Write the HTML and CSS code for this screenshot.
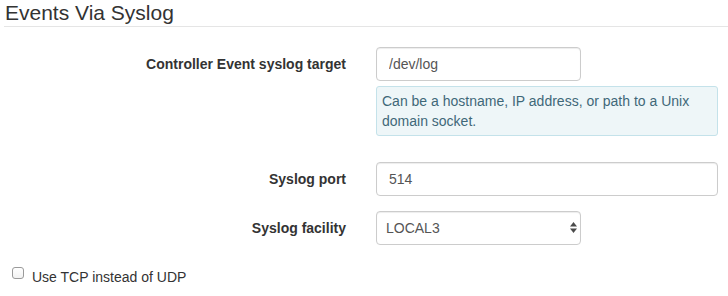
FILE: index.html
```html
<!DOCTYPE html>
<html lang="en">
<head>
  <meta charset="UTF-8">
  <title>Events Via Syslog</title>
  <link rel="stylesheet" href="styles.css">
</head>
<body>
  <form class="syslog-form">
    <h3 class="legend">Events Via Syslog</h3>

    <div class="form-group">
      <label class="control-label" for="target">Controller Event syslog target</label>
      <div class="field">
        <input type="text" id="target" class="form-control short" value="/dev/log">
        <div class="help-block">Can be a hostname, IP address, or path to a Unix domain socket.</div>
      </div>
    </div>

    <div class="form-group">
      <label class="control-label" for="port">Syslog port</label>
      <div class="field">
        <input type="text" id="port" class="form-control" value="514">
      </div>
    </div>

    <div class="form-group">
      <label class="control-label" for="facility">Syslog facility</label>
      <div class="field">
        <div class="select-wrap short">
          <select id="facility" class="form-control">
            <option>LOCAL0</option>
            <option>LOCAL1</option>
            <option>LOCAL2</option>
            <option selected>LOCAL3</option>
            <option>LOCAL4</option>
            <option>LOCAL5</option>
            <option>LOCAL6</option>
            <option>LOCAL7</option>
          </select>
          <svg class="select-arrows" width="7" height="11" viewBox="0 0 7 11">
            <path d="M3.5 0 L7 4.5 L0 4.5 Z" fill="#4a4a4a"/>
            <path d="M0 6.5 L7 6.5 L3.5 11 Z" fill="#4a4a4a"/>
          </svg>
        </div>
      </div>
    </div>

    <div class="checkbox">
      <label><input type="checkbox" id="tcp"> Use TCP instead of UDP</label>
    </div>
  </form>
</body>
</html>
```

FILE: styles.css
```css
* {
  box-sizing: border-box;
}

body {
  margin: 0;
  font-family: 'Liberation Sans', Arial, sans-serif;
  font-size: 14px;
  line-height: 20px;
  color: #333;
  background: #fff;
}

.legend {
  margin: 0 0 20px 4px;
  padding: 1px 0 2px 1px;
  font-size: 21px;
  font-weight: 400;
  line-height: 23px;
  color: #333;
  border-bottom: 1px solid #e5e5e5;
}

.form-group {
  display: grid;
  grid-template-columns: 346px 342px;
  column-gap: 30px;
  margin-bottom: 15px;
}

.control-label {
  padding-top: 7px;
  text-align: right;
  font-weight: 700;
}

.form-control {
  display: block;
  width: 100%;
  height: 34px;
  padding: 6px 12px;
  font-family: inherit;
  font-size: 14px;
  line-height: 20px;
  color: #555;
  background: #fff;
  border: 1px solid #ccc;
  border-radius: 4px;
  box-shadow: inset 0 1px 1px rgba(0, 0, 0, 0.075);
}

.short {
  width: 205px;
}

.help-block {
  margin: 5px 0 11px;
  padding: 4px 5px;
  color: #3f6878;
  background: #eef6f8;
  border: 1px solid #c4e2ea;
  border-radius: 3px;
}

.select-wrap {
  position: relative;
}

.select-wrap select {
  appearance: none;
  -webkit-appearance: none;
  padding-left: 9px;
}

.select-arrows {
  position: absolute;
  right: 4px;
  top: 11px;
  pointer-events: none;
}

.checkbox {
  margin-top: 22px;
  padding-left: 12px;
}

.checkbox label {
  display: flex;
  align-items: flex-start;
  gap: 8px;
  font-weight: 400;
}

.checkbox input {
  appearance: none;
  -webkit-appearance: none;
  width: 12px;
  height: 12px;
  margin: 0;
  border: 1px solid #9a9a9a;
  border-radius: 3px;
  background: linear-gradient(#fff, #f2f2f2);
}
```
